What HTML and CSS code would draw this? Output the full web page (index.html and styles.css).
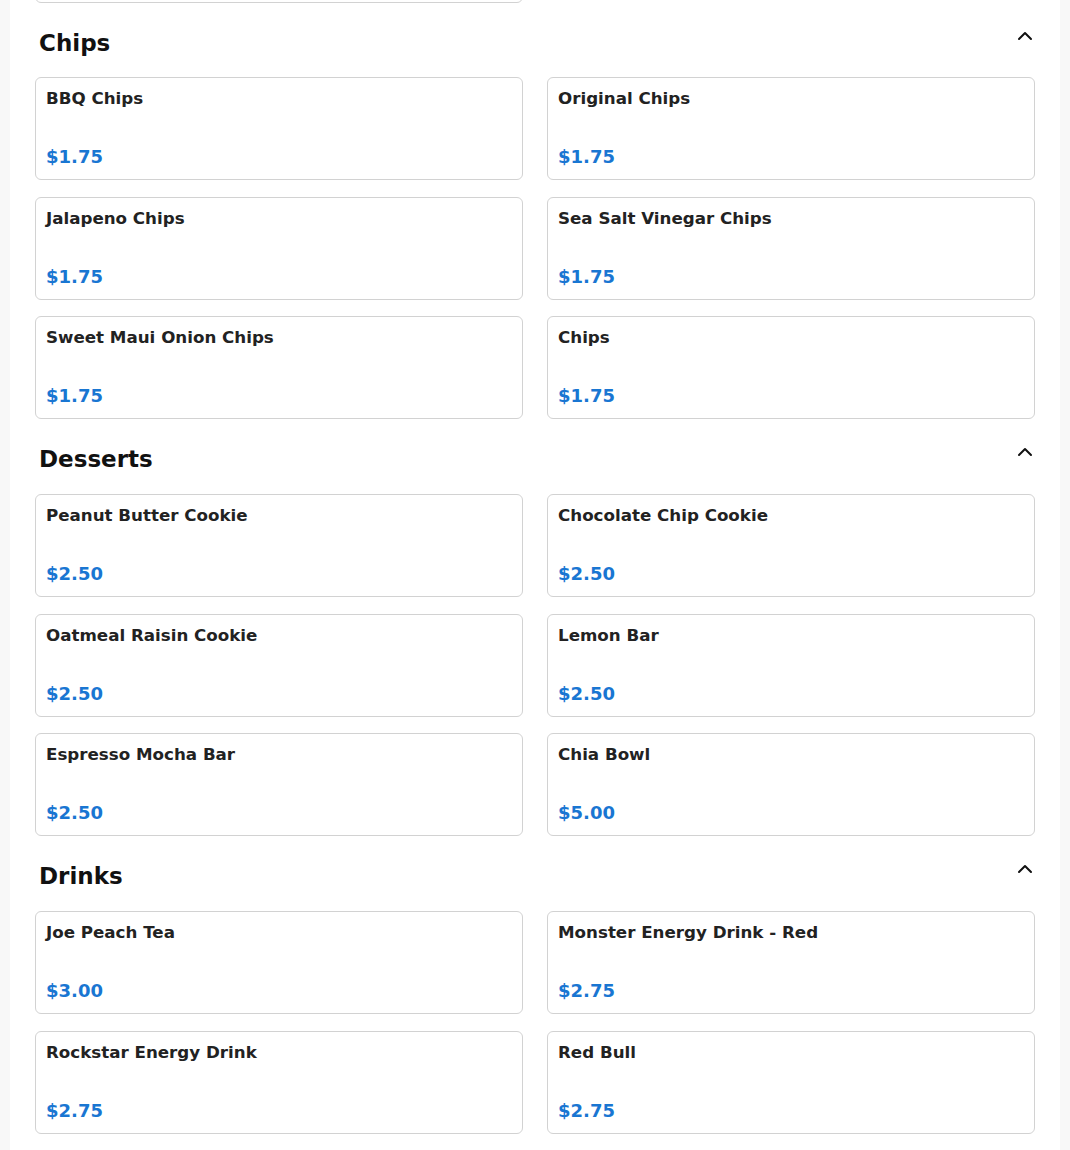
FILE: index.html
```html
<!DOCTYPE html>
<html lang="en">
<head>
<meta charset="utf-8">
<title>Menu</title>
<link rel="stylesheet" href="styles.css">
</head>
<body>
<main class="panel">
  <section class="section section-prev">
    <div class="grid">
      <div class="card card-empty"></div>
    </div>
  </section>

  <section class="section">
    <header class="section-header">
      <h2 class="section-title">Chips</h2>
      <svg class="chevron" viewBox="0 0 16 16" width="16" height="16"><path d="M2 10 L8 4 L14 10" /></svg>
    </header>
    <div class="grid">
      <div class="card"><div class="name">BBQ Chips</div><div class="price">$1.75</div></div>
      <div class="card"><div class="name">Original Chips</div><div class="price">$1.75</div></div>
      <div class="card"><div class="name">Jalapeno Chips</div><div class="price">$1.75</div></div>
      <div class="card"><div class="name">Sea Salt Vinegar Chips</div><div class="price">$1.75</div></div>
      <div class="card"><div class="name">Sweet Maui Onion Chips</div><div class="price">$1.75</div></div>
      <div class="card"><div class="name">Chips</div><div class="price">$1.75</div></div>
    </div>
  </section>

  <section class="section">
    <header class="section-header">
      <h2 class="section-title">Desserts</h2>
      <svg class="chevron" viewBox="0 0 16 16" width="16" height="16"><path d="M2 10 L8 4 L14 10" /></svg>
    </header>
    <div class="grid">
      <div class="card"><div class="name">Peanut Butter Cookie</div><div class="price">$2.50</div></div>
      <div class="card"><div class="name">Chocolate Chip Cookie</div><div class="price">$2.50</div></div>
      <div class="card"><div class="name">Oatmeal Raisin Cookie</div><div class="price">$2.50</div></div>
      <div class="card"><div class="name">Lemon Bar</div><div class="price">$2.50</div></div>
      <div class="card"><div class="name">Espresso Mocha Bar</div><div class="price">$2.50</div></div>
      <div class="card"><div class="name">Chia Bowl</div><div class="price">$5.00</div></div>
    </div>
  </section>

  <section class="section">
    <header class="section-header">
      <h2 class="section-title">Drinks</h2>
      <svg class="chevron" viewBox="0 0 16 16" width="16" height="16"><path d="M2 10 L8 4 L14 10" /></svg>
    </header>
    <div class="grid">
      <div class="card"><div class="name">Joe Peach Tea</div><div class="price">$3.00</div></div>
      <div class="card"><div class="name">Monster Energy Drink - Red</div><div class="price">$2.75</div></div>
      <div class="card"><div class="name">Rockstar Energy Drink</div><div class="price">$2.75</div></div>
      <div class="card"><div class="name">Red Bull</div><div class="price">$2.75</div></div>
    </div>
  </section>
</main>
</body>
</html>
```

FILE: styles.css
```css
html, body {
  margin: 0;
  padding: 0;
}

body {
  background: #f8f8f8;
  font-family: "DejaVu Sans", "Liberation Sans", sans-serif;
  overflow: hidden;
}

.panel {
  display: flow-root;
  width: 1050px;
  margin: 0 auto;
  background: #ffffff;
  padding: 0 25px;
  box-sizing: border-box;
  min-height: 1150px;
}

.section {
  padding-top: 27px;
}

.section-prev {
  padding-top: 0;
  margin-top: -100.5px;
}

.section-header {
  display: flex;
  justify-content: space-between;
  align-items: flex-start;
  margin-bottom: 20.4px;
}

.section-title {
  margin: 0;
  padding-left: 4px;
  font-size: 23px;
  line-height: 27.6px;
  font-weight: bold;
  color: #111111;
}

.chevron {
  display: block;
  margin-top: -1px;
  margin-right: 2px;
  fill: none;
  stroke: #111111;
  stroke-width: 2;
  stroke-linecap: round;
  stroke-linejoin: round;
}

.grid {
  display: grid;
  grid-template-columns: 1fr 1fr;
  column-gap: 24px;
  row-gap: 16.5px;
}

.card {
  height: 103px;
  box-sizing: border-box;
  border: 1px solid #d2d2d2;
  border-radius: 6px;
  padding: 10px 10px 11px;
  display: flex;
  flex-direction: column;
  justify-content: space-between;
}

.name {
  font-size: 16.7px;
  line-height: 20px;
  font-weight: bold;
  color: #222222;
}

.price {
  font-size: 18px;
  line-height: 22px;
  font-weight: bold;
  color: #1976d2;
}
```
